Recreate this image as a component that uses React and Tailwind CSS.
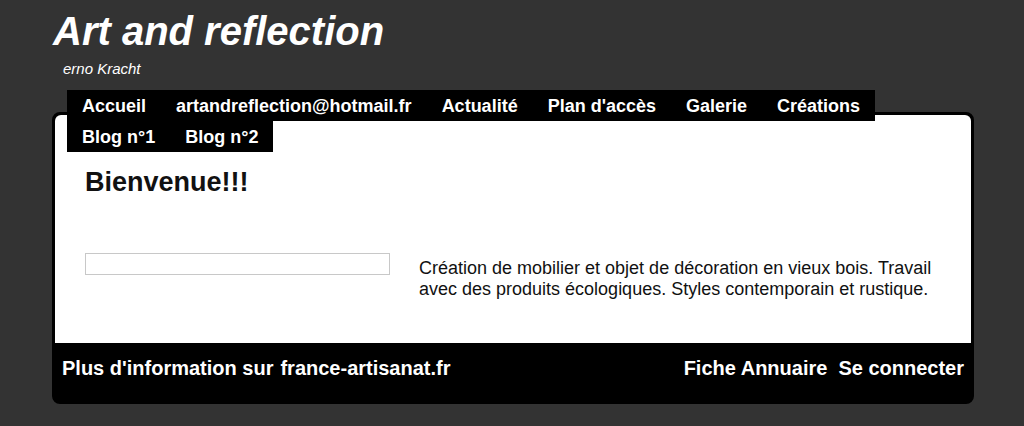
const navLinks = [
  "Accueil",
  "artandreflection@hotmail.fr",
  "Actualité",
  "Plan d'accès",
  "Galerie",
  "Créations",
  "Blog n°1",
  "Blog n°2",
];

function App() {
  return (
    <div className="min-h-[426px] bg-[#333333] font-['Liberation_Sans',Arial,sans-serif] text-white">
      <div className="ml-[52px] w-[922px] pb-[21px]">
        {/* Header */}
        <h1 className="pt-[8px] pl-[1px] text-[40px] leading-[46px] font-bold italic">
          Art and reflection
        </h1>
        <p className="mt-[6px] pl-[11px] text-[15px] leading-[17px] italic">erno Kracht</p>

        {/* Main box */}
        <div className="relative mt-[35px] rounded-[8px] border-[3px] border-black bg-black">
          {/* Menu */}
          <nav className="absolute top-[-25px] left-[12px] flex w-[892px] flex-wrap">
            {navLinks.map((link) => (
              <a
                key={link}
                href="#"
                className="bg-black px-[15px] pt-[1px] pb-0 text-[18px] leading-[30px] font-bold text-white"
              >
                {link}
              </a>
            ))}
          </nav>

          <div className="rounded-t-[6px] bg-white px-[30px] pt-[52px] pb-[43px] text-[#111111]">
            <h2 className="text-[27px] leading-[31px] font-bold">Bienvenue!!!</h2>
            <div className="mt-[55px] flex items-start">
              <div className="h-[22px] w-[305px] shrink-0 border border-[#c8c8c8]"></div>
              <p className="mt-[5px] ml-[29px] flex-1 text-[18px] leading-[21px]">
                Création de mobilier et objet de décoration en vieux bois. Travail avec des
                produits écologiques. Styles contemporain et rustique.
              </p>
            </div>
          </div>

          {/* Footer */}
          <div className="flex items-start justify-between px-[7px] pt-[14px] pb-[21px] text-[20px] leading-[23px] font-bold">
            <div className="flex gap-[7px]">
              <span>Plus d'information sur</span>
              <a href="#">france-artisanat.fr</a>
            </div>
            <div className="flex gap-[11px]">
              <a href="#">Fiche Annuaire</a>
              <a href="#">Se connecter</a>
            </div>
          </div>
        </div>
      </div>
    </div>
  );
}

export default App;
